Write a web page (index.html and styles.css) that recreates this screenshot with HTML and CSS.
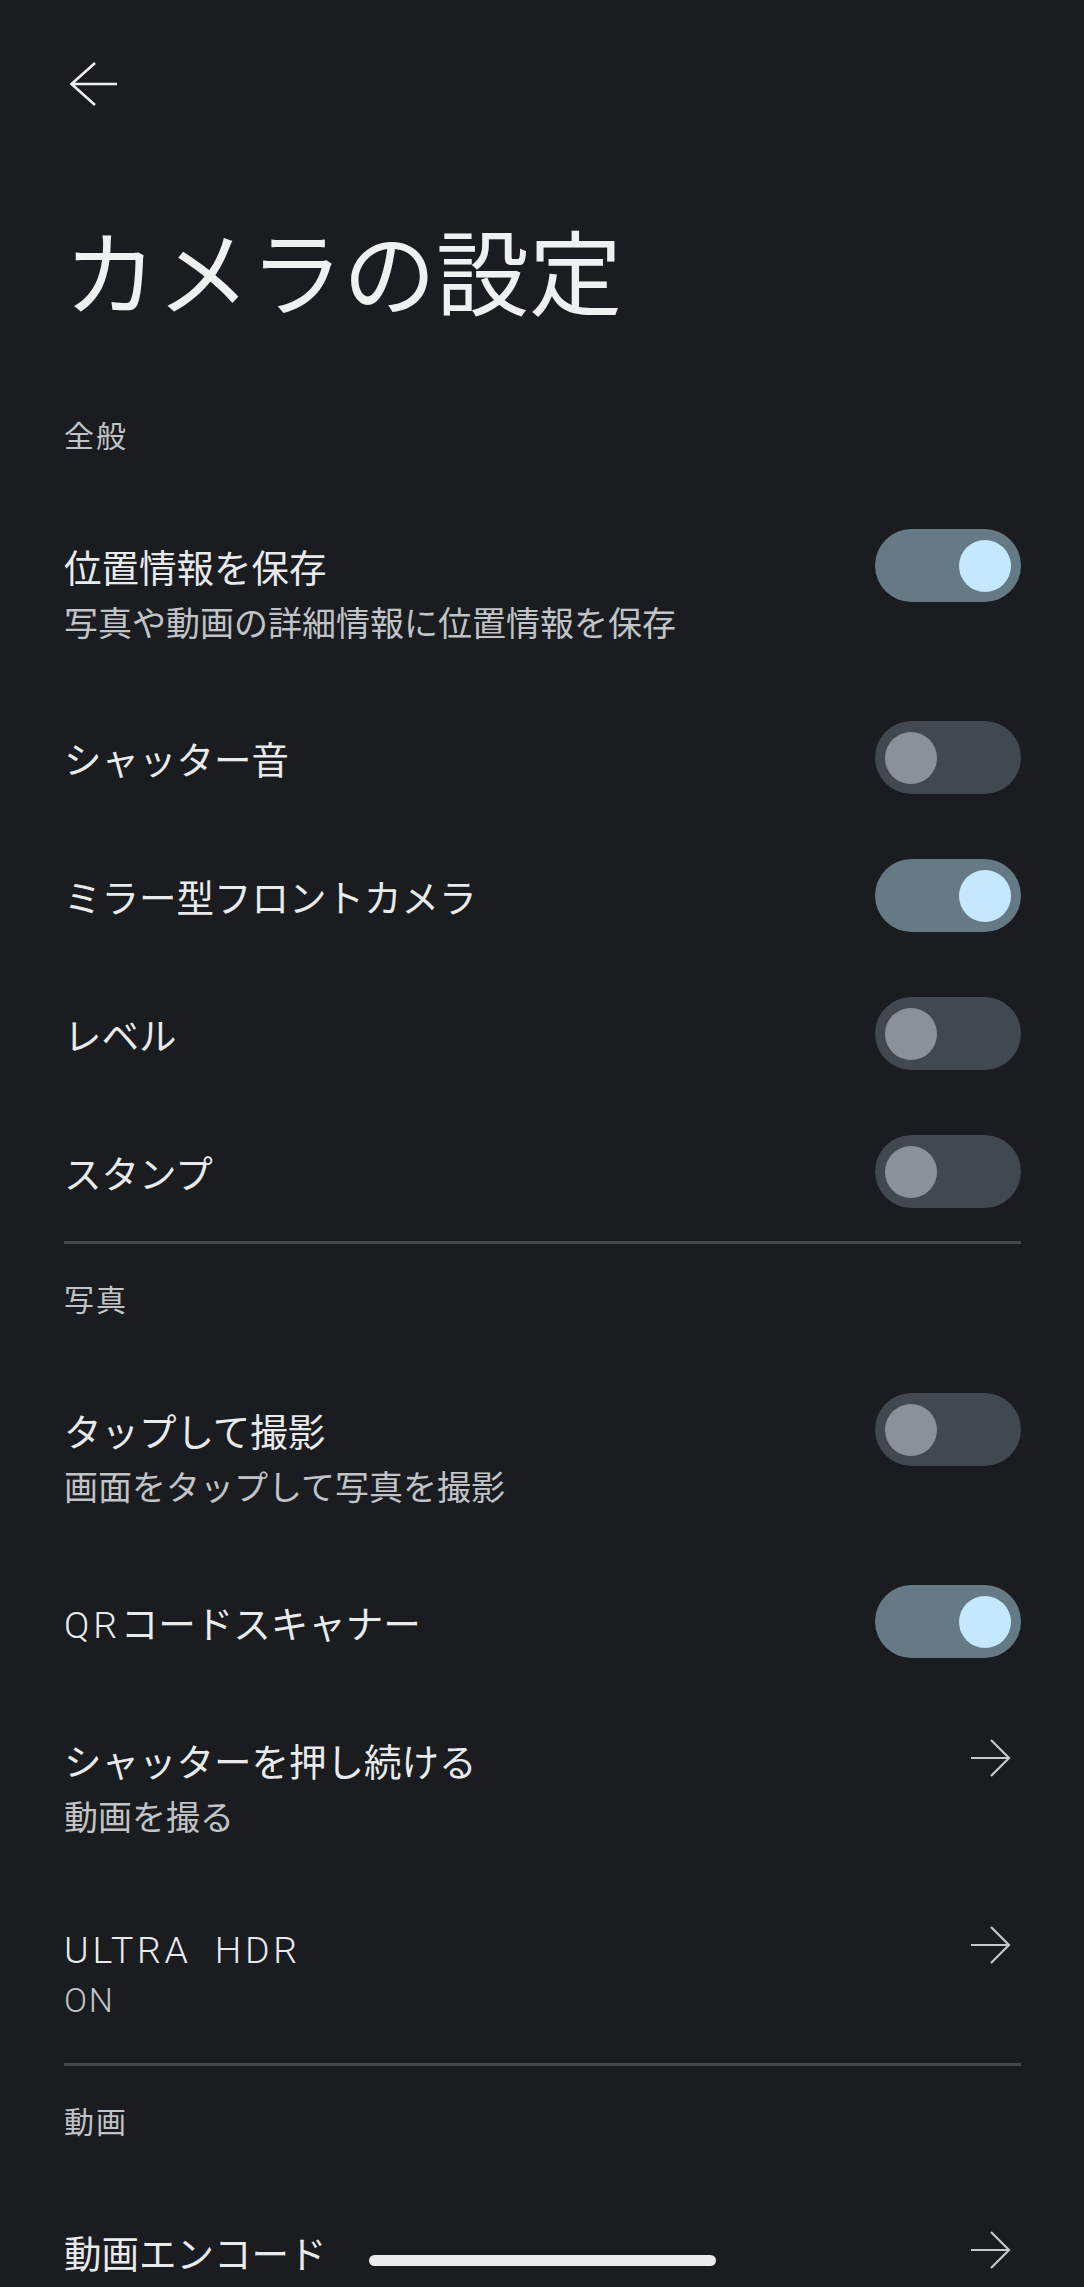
FILE: index.html
```html
<!DOCTYPE html>
<html lang="ja">
<head>
<meta charset="utf-8">
<title>カメラの設定</title>
<link rel="stylesheet" href="styles.css">
</head>
<body>
<div class="screen">
  <header class="topbar">
    <button class="back" aria-label="戻る">
      <svg width="48" height="48" viewBox="0 0 48 48" aria-hidden="true">
        <path d="M2.5 24 H48 M26 3 L2.5 24 L26 45" fill="none" stroke="currentColor" stroke-width="2.6" stroke-linejoin="miter"/>
      </svg>
    </button>
  </header>

  <main class="content">
    <h1 class="page-title">カメラの設定</h1>

    <section class="group">
      <h2 class="group-title">全般</h2>
      <div class="row">
        <div class="text">
          <div class="title">位置情報を保存</div>
          <div class="sub">写真や動画の詳細情報に位置情報を保存</div>
        </div>
        <span class="switch on"><span class="knob"></span></span>
      </div>
      <div class="row">
        <div class="text"><div class="title">シャッター音</div></div>
        <span class="switch"><span class="knob"></span></span>
      </div>
      <div class="row">
        <div class="text"><div class="title">ミラー型フロントカメラ</div></div>
        <span class="switch on"><span class="knob"></span></span>
      </div>
      <div class="row">
        <div class="text"><div class="title">レベル</div></div>
        <span class="switch"><span class="knob"></span></span>
      </div>
      <div class="row">
        <div class="text"><div class="title">スタンプ</div></div>
        <span class="switch"><span class="knob"></span></span>
      </div>
    </section>

    <hr class="divider">

    <section class="group">
      <h2 class="group-title">写真</h2>
      <div class="row">
        <div class="text">
          <div class="title">タップして撮影</div>
          <div class="sub">画面をタップして写真を撮影</div>
        </div>
        <span class="switch"><span class="knob"></span></span>
      </div>
      <div class="row">
        <div class="text"><div class="title"><span class="latin">QR</span>コードスキャナー</div></div>
        <span class="switch on"><span class="knob"></span></span>
      </div>
      <div class="row">
        <div class="text">
          <div class="title">シャッターを押し続ける</div>
          <div class="sub">動画を撮る</div>
        </div>
        <span class="go">
          <svg width="44" height="44" viewBox="0 0 44 44" aria-hidden="true">
            <path d="M3 22 H40.5 M23 4 L41 22 L23 40" fill="none" stroke="currentColor" stroke-width="2.2"/>
          </svg>
        </span>
      </div>
      <div class="row compact">
        <div class="text">
          <div class="title"><span class="latin wide">ULTRA HDR</span></div>
          <div class="sub"><span class="latin">ON</span></div>
        </div>
        <span class="go">
          <svg width="44" height="44" viewBox="0 0 44 44" aria-hidden="true">
            <path d="M3 22 H40.5 M23 4 L41 22 L23 40" fill="none" stroke="currentColor" stroke-width="2.2"/>
          </svg>
        </span>
      </div>
    </section>

    <hr class="divider">

    <section class="group">
      <h2 class="group-title">動画</h2>
      <div class="row">
        <div class="text"><div class="title">動画エンコード</div></div>
        <span class="go">
          <svg width="44" height="44" viewBox="0 0 44 44" aria-hidden="true">
            <path d="M3 22 H40.5 M23 4 L41 22 L23 40" fill="none" stroke="currentColor" stroke-width="2.2"/>
          </svg>
        </span>
      </div>
    </section>
  </main>

  <div class="nav-handle"></div>
</div>
</body>
</html>
```

FILE: styles.css
```css
html, body {
  margin: 0;
  padding: 0;
  background: #1a1c1f;
}

body {
  font-family: "Noto Sans CJK JP", "Noto Sans", sans-serif;
  color: #e8eaeb;
}

.screen {
  position: relative;
  height: 2287px;
  overflow: hidden;
  background: #1a1c1f;
}

.topbar {
  padding: 60px 0 0 69px;
}

.back {
  display: block;
  width: 48px;
  height: 48px;
  padding: 0;
  margin: 0;
  border: 0;
  background: none;
  color: #eef0f0;
}

.back svg {
  display: block;
}

.content {
  padding: 0 63px 0 64px;
}

.page-title {
  margin: 106px 0 90px;
  font-size: 93px;
  line-height: 110px;
  font-weight: 400;
  color: #eff1f1;
}

.group-title {
  margin: 34px 0 43px;
  font-size: 30px;
  line-height: 40px;
  letter-spacing: 2px;
  font-weight: 400;
  color: #c1c4c7;
}

.row {
  display: flex;
  align-items: flex-start;
  padding: 32px 0 33px;
}

.row.compact {
  padding: 27px 0 31px;
}

.text {
  flex: 1;
  min-width: 0;
}

.title {
  font-size: 37.5px;
  line-height: 73px;
  color: #e8eaeb;
  white-space: nowrap;
}

.sub {
  font-size: 34px;
  line-height: 39px;
  margin-bottom: 15px;
  color: #c0c4c7;
  white-space: nowrap;
}

.row.compact .sub {
  line-height: 30px;
}

.latin {
  font-family: Roboto, "Noto Sans", sans-serif;
  font-weight: 300;
  letter-spacing: 0.1em;
  line-height: 1;
}

.sub .latin {
  letter-spacing: 0.05em;
}

.latin.wide {
  word-spacing: 10px;
}

.switch {
  flex: none;
  display: flex;
  align-items: center;
  box-sizing: border-box;
  width: 146px;
  height: 73px;
  padding: 0 10px;
  border-radius: 37px;
  background: #41484e;
}

.switch.on {
  justify-content: flex-end;
  background: #657a85;
}

.knob {
  width: 52px;
  height: 52px;
  border-radius: 50%;
  background: #8c9199;
}

.switch.on .knob {
  background: #c3e8ff;
}

.go {
  flex: none;
  display: flex;
  align-items: center;
  justify-content: flex-end;
  box-sizing: border-box;
  width: 146px;
  height: 73px;
  padding: 0 9px 4px 0;
  color: #c6c9cc;
}

.go svg {
  display: block;
}

.divider {
  margin: 0;
  border: 0;
  height: 3px;
  background: #45484b;
}

.nav-handle {
  position: absolute;
  left: 50%;
  bottom: 21px;
  width: 347px;
  height: 11px;
  margin-left: -173px;
  border-radius: 6px;
  background: #ebebeb;
}
```
